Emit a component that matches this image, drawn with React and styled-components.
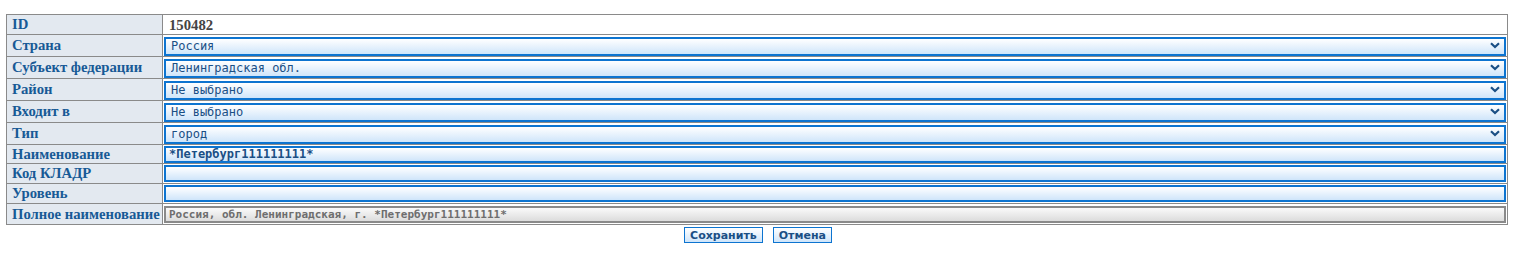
import styled, { createGlobalStyle } from 'styled-components'

const GlobalStyle = createGlobalStyle`
    body {
        margin: 0;
        background: #ffffff;
        font-family: "Liberation Serif", serif;
    }
`;

const Page = styled.div`
    padding: 14px 0 0 6px;
    width: 1502px;
`;

const Table = styled.table`
    width: 1502px;
    border-collapse: collapse;
    border: 1px solid #8a8a8a;
`;

const Row = styled.tr`
    height: ${(p) => p.$h}px;
`;

const Label = styled.td`
    width: 150px;
    padding: 0 0 0 5px;
    background: #e3e9f0;
    border: 1px solid #8a8a8a;
    color: #175a96;
    font: bold 14.7px "Liberation Serif", serif;
    white-space: nowrap;
    vertical-align: middle;
`;

const Cell = styled.td`
    padding: 0 1px;
    border: 1px solid #8a8a8a;
    vertical-align: middle;
`;

const IdValue = styled.span`
    padding-left: 5px;
    color: #444444;
    font: bold 14.7px "Liberation Serif", serif;
`;

const SelectWrap = styled.div`
    position: relative;
    height: 19px;
`;

const Select = styled.select`
    appearance: none;
    width: 100%;
    height: 19px;
    box-sizing: border-box;
    margin: 0;
    padding: 0 0 0 5px;
    border: 2px solid #0d74d0;
    border-radius: 0;
    background: linear-gradient(#ffffff, #cfe5fa);
    color: #1a4f85;
    font: 12px "DejaVu Sans Mono", monospace;
    outline: none;
`;

const Chevron = styled.svg`
    position: absolute;
    right: 6px;
    top: 6px;
    pointer-events: none;
`;

const Input = styled.input`
    display: block;
    width: 100%;
    height: 17px;
    box-sizing: border-box;
    margin: 0;
    padding: 0 0 0 3px;
    border: 2px solid ${(p) => (p.readOnly ? '#8a8a8a' : '#0d74d0')};
    background: ${(p) =>
        p.readOnly ? 'linear-gradient(#fafafa, #dcdcdc)' : 'linear-gradient(#ffffff, #cfe5fa)'};
    color: ${(p) => (p.readOnly ? '#6e6e6e' : '#1a4f85')};
    font: bold ${(p) => (p.readOnly ? 11 : 12)}px "DejaVu Sans Mono", monospace;
    outline: none;
`;

const Buttons = styled.div`
    display: flex;
    justify-content: center;
    gap: 10px;
    padding-top: 2px;
    padding-left: 2px;
`;

const Button = styled.button`
    height: 16px;
    margin: 0;
    padding: 0 5px;
    border: 1px solid #0d74d0;
    border-radius: 0;
    background: linear-gradient(#ffffff, #cfe5fa);
    color: #1a4f85;
    font: bold 11px "DejaVu Sans", sans-serif;
    line-height: 13px;
`;

const DropDown = ({ value }) => (
    <SelectWrap>
        <Select defaultValue={value}>
            <option>{value}</option>
        </Select>
        <Chevron width="10" height="7" viewBox="0 0 10 7">
            <path d="M1 1.2 L5 5 L9 1.2" fill="none" stroke="#1a4f85" strokeWidth="2.2" />
        </Chevron>
    </SelectWrap>
)

const selects = [
    ['Страна', 'Россия'],
    ['Субъект федерации', 'Ленинградская обл.'],
    ['Район', 'Не выбрано'],
    ['Входит в', 'Не выбрано'],
    ['Тип', 'город'],
]

const App = () => {
    return (
        <Page>
            <GlobalStyle />
            <Table>
                <tbody>
                    <Row $h={20}>
                        <Label>ID</Label>
                        <Cell><IdValue>150482</IdValue></Cell>
                    </Row>
                    {selects.map(([label, value]) => (
                        <Row $h={22} key={label}>
                            <Label>{label}</Label>
                            <Cell><DropDown value={value} /></Cell>
                        </Row>
                    ))}
                    <Row $h={19}>
                        <Label>Наименование</Label>
                        <Cell><Input defaultValue="*Петербург111111111*" /></Cell>
                    </Row>
                    <Row $h={20}>
                        <Label>Код КЛАДР</Label>
                        <Cell><Input defaultValue="" /></Cell>
                    </Row>
                    <Row $h={20}>
                        <Label>Уровень</Label>
                        <Cell><Input defaultValue="" /></Cell>
                    </Row>
                    <Row $h={21}>
                        <Label>Полное наименование</Label>
                        <Cell>
                            <Input readOnly defaultValue="Россия, обл. Ленинградская, г. *Петербург111111111*" />
                        </Cell>
                    </Row>
                </tbody>
            </Table>
            <Buttons>
                <Button>Сохранить</Button>
                <Button>Отмена</Button>
            </Buttons>
        </Page>
    )
}

export default App;
